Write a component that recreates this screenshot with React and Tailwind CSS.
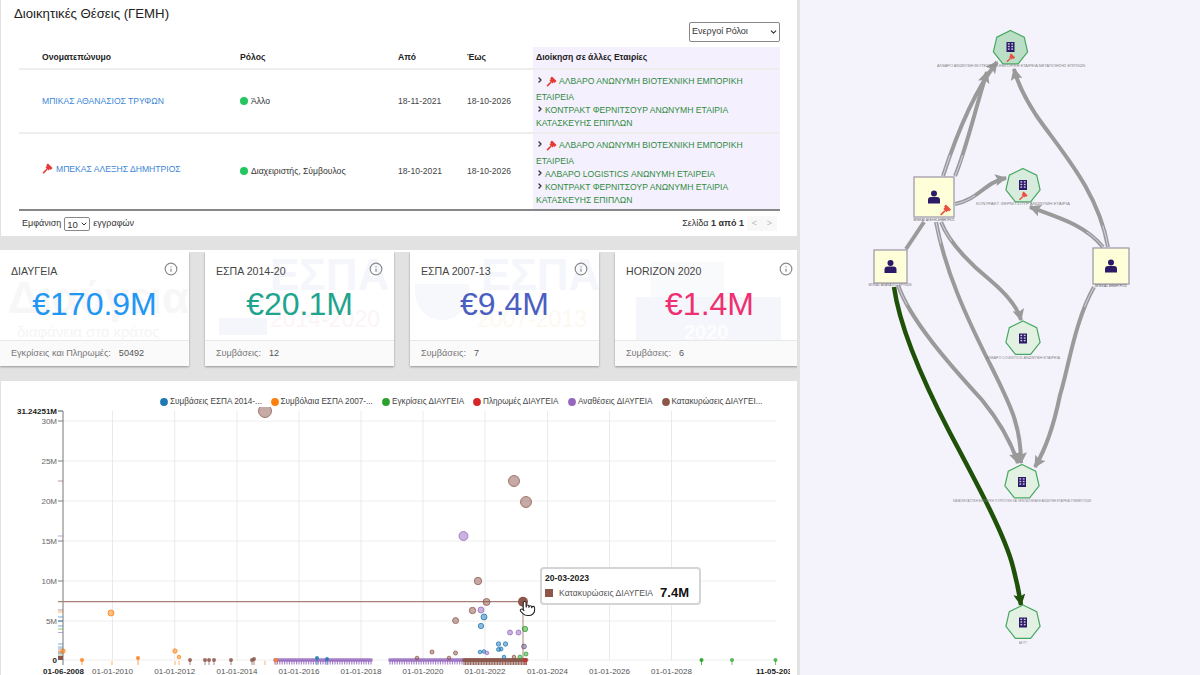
import { ChevronDown, ChevronRight, Info, Pointer } from "lucide-react";

const GAVEL_HEAD = "M6.5 .5 11.5 5.5 9.5 7.5 8.6 6.6 7 8.2 3.8 5 5.4 3.4 4.5 2.5Z";
const GAVEL_HANDLE = "M4.8 6.2 .6 10.4 1.8 11.6 6 7.4Z";

const Gavel = ({ className }) => (
  <svg viewBox="0 0 12 12" className={className}>
    <path d={GAVEL_HEAD} fill="#e53935" />
    <path d={GAVEL_HANDLE} fill="#e53935" />
  </svg>
);

const Director = ({ gavel, children }) => (
  <div className="leading-[13px] text-[#2e8b3d]">
    <ChevronRight size={8} strokeWidth={4} className="inline align-baseline text-[#333] mr-[1px]" />
    {gavel && <Gavel className="inline w-[11px] h-[11px] ml-[1px] mr-[2px] my-[4px] align-middle" />}
    {children}
  </div>
);

const Status = ({ children }) => (
  <span className="flex items-center gap-[3px] text-[#333]">
    <span className="w-[8px] h-[8px] rounded-full bg-[#22c55e]" />
    {children}
  </span>
);

const Dropdown = ({ value, className, iconSize }) => (
  <span className={`relative inline-block ${className}`}>
    <select className="appearance-none w-full h-full border border-[#888] rounded-[2px] bg-white pl-[2px] text-inherit">
      <option>{value}</option>
    </select>
    <ChevronDown size={iconSize} strokeWidth={3} className="absolute right-[2px] top-1/2 -translate-y-1/2 text-[#333]" />
  </span>
);

const PositionsTable = () => (
  <section className="ml-[1px] w-[796px] h-[236px] bg-white relative">
    <div className="flex justify-between pl-[13px] pr-[17px] pt-[6px] h-[47px]">
      <h2 className="text-[13.2px] text-[#222] leading-[16px]">Διοικητικές Θέσεις (ΓΕΜΗ)</h2>
      <Dropdown value="Ενεργοί Ρόλοι" iconSize={9} className="mt-[16px] w-[91px] h-[20px] text-[9px] text-[#333]" />
    </div>
    <div className="ml-[18px] w-[761px]">
      <table className="table-fixed w-full text-[8.6px] border-collapse">
        <colgroup>
          <col className="w-[217px]" />
          <col className="w-[158px]" />
          <col className="w-[69px]" />
          <col className="w-[70px]" />
          <col className="w-[247px]" />
        </colgroup>
        <thead>
          <tr className="h-[22px] border-b-2 border-[#eeeeee] font-bold text-[#222] text-left">
            <th className="pl-[23px]">Ονοματεπώνυμο</th>
            <th className="pl-[4px]">Ρόλος</th>
            <th className="pl-[4px]">Από</th>
            <th className="pl-[4px]">Έως</th>
            <th className="pl-[3px] bg-[#f5f0fd]">Διοίκηση σε άλλες Εταιρίες</th>
          </tr>
        </thead>
        <tbody>
          <tr className="h-[64px] border-b-2 border-[#eeeeee] text-[#444]">
            <td className="pl-[23px] text-[#3b86d8]">ΜΠΙΚΑΣ ΑΘΑΝΑΣΙΟΣ ΤΡΥΦΩΝ</td>
            <td className="pl-[4px]"><Status>Άλλο</Status></td>
            <td className="pl-[4px]">18-11-2021</td>
            <td className="pl-[4px]">18-10-2026</td>
            <td className="pl-[3px] bg-[#f5f0fd]">
              <Director gavel>ΑΛΒΑΡΟ ΑΝΩΝΥΜΗ ΒΙΟΤΕΧΝΙΚΗ ΕΜΠΟΡΙΚΗ ΕΤΑΙΡΕΙΑ</Director>
              <Director>ΚΟΝΤΡΑΚΤ ΦΕΡΝΙΤΣΟΥΡ ΑΝΩΝΥΜΗ ΕΤΑΙΡΙΑ ΚΑΤΑΣΚΕΥΗΣ ΕΠΙΠΛΩΝ</Director>
            </td>
          </tr>
          <tr className="h-[77px] border-b-2 border-[#888888] text-[#444]">
            <td className="pl-[23px] text-[#3b86d8] pb-[5px]">
              <span className="flex items-center gap-[3px]">
                <Gavel className="w-[11px] h-[11px]" />
                ΜΠΕΚΑΣ ΑΛΕΞΗΣ ΔΗΜΗΤΡΙΟΣ
              </span>
            </td>
            <td className="pl-[4px]"><Status>Διαχειριστής, Σύμβουλος</Status></td>
            <td className="pl-[4px]">18-10-2021</td>
            <td className="pl-[4px]">18-10-2026</td>
            <td className="pl-[3px] bg-[#f5f0fd]">
              <Director gavel>ΑΛΒΑΡΟ ΑΝΩΝΥΜΗ ΒΙΟΤΕΧΝΙΚΗ ΕΜΠΟΡΙΚΗ ΕΤΑΙΡΕΙΑ</Director>
              <Director>ΑΛΒΑΡΟ LOGISTICS ΑΝΩΝΥΜΗ ΕΤΑΙΡΕΙΑ</Director>
              <Director>ΚΟΝΤΡΑΚΤ ΦΕΡΝΙΤΣΟΥΡ ΑΝΩΝΥΜΗ ΕΤΑΙΡΙΑ ΚΑΤΑΣΚΕΥΗΣ ΕΠΙΠΛΩΝ</Director>
            </td>
          </tr>
        </tbody>
      </table>
      <div className="flex justify-between items-center h-[25px] pl-[3px] text-[9px] text-[#333]">
        <span className="flex items-center gap-[3px]">
          Εμφάνιση
          <Dropdown value="10" iconSize={8} className="w-[26px] h-[14px] text-[9.5px]" />
          εγγραφών
        </span>
        <span className="flex items-center">
          <span>Σελίδα <b>1 από 1</b></span>
          <span className="ml-[3px] w-[15px] h-[15px] bg-[#f8f8f8] text-[#bbb] text-center leading-[14px]">&lt;</span>
          <span className="w-[15px] h-[15px] mr-[3px] bg-[#f8f8f8] text-[#bbb] text-center leading-[14px]">&gt;</span>
        </span>
      </div>
    </div>
  </section>
);

const StatCard = ({ title, value, color, label, count, children }) => (
  <div className="relative w-[189px] h-[114px] shrink-0 bg-white shadow-[0_1px_2px_rgba(0,0,0,0.35)] overflow-hidden">
    {children}
    <div className="relative h-[88px]">
      <div className="flex justify-between px-[11px] pt-[12px] text-[10.6px] text-[#444] leading-[14px]">
        {title}
        <Info size={14} className="text-[#8a8a8a] -mt-[2px]" />
      </div>
      <div className={`text-center text-[32px] leading-[36px] mt-[8px] ${color}`}>{value}</div>
    </div>
    <div className="relative h-[26px] bg-[#fafafa] border-t border-[#e8e8e8] pl-[11px] flex items-center gap-[8px] text-[9.1px] text-[#777]">
      {label}
      <span className="text-[#555]">{count}</span>
    </div>
  </div>
);

const StatCards = () => (
  <section className="mt-[14px] w-[797px] border-t-2 border-white h-[131px] flex gap-[16px] overflow-hidden">
    <StatCard title="ΔΙΑΥΓΕΙΑ" value="€170.9M" color="text-[#2196f3]" label="Εγκρίσεις και Πληρωμές:" count="50492">
      <div className="absolute left-[8px] top-[22px] text-[44px] font-bold leading-[48px] text-[#f7f7f8]">Διαύγεια</div>
      <div className="absolute left-[17px] top-[71px] text-[15px] leading-[17px] text-[#f5f5f6] whitespace-nowrap">διαφάνεια στο κράτος</div>
    </StatCard>
    <StatCard title="ΕΣΠΑ 2014-20" value="€20.1M" color="text-[#1fa58e]" label="Συμβάσεις:" count="12">
      <div className="absolute left-[65px] top-[0px] text-[44px] leading-[46px] font-bold text-[#f4f6fb]">ΕΣΠΑ</div>
      <div className="absolute left-[65px] top-[52px] text-[23px] leading-[30px] text-[#fdf4f5] whitespace-nowrap">2014-2020</div>
      <div className="absolute left-[14px] top-[66px] w-[48px] h-[17px] bg-[#f4f6fb]" />
    </StatCard>
    <StatCard title="ΕΣΠΑ 2007-13" value="€9.4M" color="text-[#4b5ec1]" label="Συμβάσεις:" count="7">
      <div className="absolute left-[71px] top-[0px] text-[44px] leading-[46px] font-bold text-[#f4f6fb]">ΕΣΠΑ</div>
      <div className="absolute left-[67px] top-[52px] text-[23px] leading-[30px] text-[#fdf8f1] whitespace-nowrap">2007-2013</div>
      <div className="absolute left-[5px] top-[32px] w-[54px] h-[36px] rounded-b-full bg-[#f7f8fc]" />
    </StatCard>
    <StatCard title="HORIZON 2020" value="€1.4M" color="text-[#ee2f70]" label="Συμβάσεις:" count="6">
      <div className="absolute left-[21px] top-[45px] w-[145px] h-[43px] bg-[#f4f6fb]" />
      <div className="absolute left-[36px] top-[10px] w-[73px] h-[35px] bg-[#f9fafc]" />
      <div className="absolute left-[69px] top-[70px] text-[20px] leading-[20px] font-bold text-[#fdfdfe]">2020</div>
    </StatCard>
  </section>
);

const legend = [
  ["#1f77b4", "Συμβάσεις ΕΣΠΑ 2014-...", 88.5],
  ["#ff7f0e", "Συμβόλαια ΕΣΠΑ 2007-...", 89.5],
  ["#2ca02c", "Εγκρίσεις ΔΙΑΥΓΕΙΑ", 69],
  ["#d62728", "Πληρωμές ΔΙΑΥΓΕΙΑ", 73],
  ["#9467bd", "Αναθέσεις ΔΙΑΥΓΕΙΑ", 71.5],
  ["#8c564b", "Κατακυρώσεις ΔΙΑΥΓΕΙ...", 88],
];

const yTicks = [["30M", 421], ["25M", 461], ["20M", 501], ["15M", 541], ["10M", 581], ["5M", 621]];
const xTicks = [
  ["01-01-2010", 112.5], ["01-01-2012", 174.7], ["01-01-2014", 237], ["01-01-2016", 299], ["01-01-2018", 361],
  ["01-01-2020", 423], ["01-01-2022", 485], ["01-01-2024", 547.5], ["01-01-2026", 609.5], ["01-01-2028", 671.5],
];

const BROWN = "#8c564b";
const PURPLE = "#9467bd";
const BLUE = "#1f77b4";
const ORANGE = "#ff7f0e";
const GREEN = "#2ca02c";

const dots = [
  [265, 411, 6.5, BROWN], [514, 481, 5.5, BROWN], [526, 502, 5.5, BROWN], [463.5, 536, 4.5, PURPLE],
  [478, 581, 3.7, BROWN], [486.5, 602, 3.5, BROWN], [472.5, 610.5, 3.2, BROWN], [481, 610, 3, PURPLE],
  [484, 617, 3, BLUE], [481, 626, 2.7, BLUE], [455.6, 620.6, 3, BROWN], [510, 632.5, 2.5, PURPLE],
  [518.5, 632.5, 2.5, PURPLE], [525, 629, 2.7, GREEN], [498.5, 644, 2.2, BLUE], [505.5, 644, 2.2, BLUE],
  [501, 649, 2, BLUE], [498.5, 649.5, 2, BLUE], [432, 652, 2, BROWN], [455.5, 653, 2, BROWN],
  [480, 652, 1.8, BLUE], [484, 651.5, 1.8, BLUE], [487, 653, 1.8, PURPLE], [417, 658, 1.8, BROWN],
  [449, 658, 1.8, BROWN], [526, 654, 2, GREEN], [520, 657, 2, GREEN], [504, 657, 1.8, BLUE],
  [514, 657, 1.8, BROWN], [524, 646.5, 2.4, "#6a5a8c"], [111, 613, 3, ORANGE], [63, 651, 2.2, ORANGE],
  [175, 651, 2.2, ORANGE], [179, 657, 1.8, ORANGE],
];

const pins = [
  [82, 660, ORANGE], [138, 658, ORANGE], [190, 660, BROWN], [205, 660, BROWN], [209, 660, BROWN], [214, 660, BROWN],
  [231, 660, BROWN], [252, 660, BROWN], [254, 659, BROWN], [276, 660, ORANGE], [317, 658, BLUE], [327, 659, BLUE],
  [525, 660, "#d62728"], [701.5, 660, "#1b9a1b"], [732, 660, "#3cae3c"], [775.5, 660, "#3cae3c"],
];

const rug = [
  [481, BROWN], [536, PURPLE], [610, BROWN], [612, ORANGE], [617, BLUE], [621, BLUE], [626, BLUE],
  [629, GREEN], [632.5, PURPLE], [644, BLUE], [647, BLUE], [649, BLUE], [651, ORANGE], [652, BROWN], [653, PURPLE],
  [654, GREEN], [656, BROWN], [657, GREEN],
];

const band = (from, to, step) => {
  const xs = [];
  for (let x = from; x <= to; x += step) xs.push(x);
  return xs;
};

const Chart = () => (
  <section className="relative ml-[1px] w-[796px] h-[294px] bg-white">
    <div className="flex h-[26px] pt-[15px] pl-[159px] text-[8.2px] leading-[11px] text-[#444]">
      {legend.map(([color, name, width]) => (
        <span key={name} className="flex items-center gap-[2px] shrink-0 mr-[12px]">
          <svg width="8" height="8" viewBox="0 0 8 8"><circle cx="4" cy="4" r="3.9" fill={color} /></svg>
          <span className="whitespace-nowrap" style={{ width }}>{name}</span>
        </span>
      ))}
    </div>
    <svg width="789" height="268" viewBox="1 407 789 268" className="block font-['Liberation_Sans',Arial,sans-serif]">
      {yTicks.map(([t, y]) => (
        <g key={t}>
          <line x1="58" x2="776" y1={y} y2={y} stroke="#eeeeee" />
          <line x1="58" x2="63" y1={y} y2={y} stroke="#888" />
          <text x="57" y={y + 3} fontSize="8" textAnchor="end" fill="#666">{t}</text>
        </g>
      ))}
      <line x1="63" x2="776" y1="660" y2="660" stroke="#eeeeee" />
      {xTicks.map(([t, x]) => (
        <g key={t}>
          <line x1={x} x2={x} y1="411" y2="660" stroke="#eaeaea" />
          <text x={x} y="674" fontSize="8" textAnchor="middle" fill="#555">{t}</text>
        </g>
      ))}
      <line x1="58" x2="63" y1="411" y2="411" stroke="#555" />
      <line x1="63" x2="63" y1="411" y2="665" stroke="#777" />
      <text x="57" y="414" fontSize="8" fontWeight="bold" textAnchor="end" fill="#222">31.24251M</text>
      <text x="57" y="663" fontSize="8" fontWeight="bold" textAnchor="end" fill="#222">0</text>
      <text x="63.5" y="674" fontSize="8" fontWeight="bold" textAnchor="middle" fill="#222">01-06-2008</text>
      <text x="756" y="674" fontSize="8" fontWeight="bold" fill="#222">11-05-2030</text>

      {rug.map(([y, c], i) => <line key={i} x1="58" x2="63" y1={y} y2={y} stroke={c} strokeOpacity="0.6" />)}
      <rect x="58" y="656" width="5" height="4" fill={BROWN} />

      <line x1="58" x2="523" y1="601.7" y2="601.7" stroke="#a67f77" strokeWidth="1.2" />
      <line x1="523" x2="523" y1="601.7" y2="660" stroke="#c8aea8" strokeWidth="1.5" />

      {[112, 175, 179, 265].map((x) => (
        <line key={x} x1={x} x2={x} y1="661" y2="665" stroke="#ffb066" />
      ))}

      {band(275, 371, 2.4).concat(band(390, 464, 2.4)).map((x) => (
        <g key={x}>
          <line x1={x} x2={x} y1="660" y2="664.5" stroke={PURPLE} strokeOpacity="0.8" strokeWidth="1.2" />
          <circle cx={x} cy="660" r="1.9" fill={PURPLE} fillOpacity="0.75" />
        </g>
      ))}
      {band(464, 527, 1.6).map((x) => (
        <g key={x}>
          <line x1={x} x2={x} y1="660" y2="665" stroke={BROWN} strokeOpacity="0.9" strokeWidth="1.2" />
          <circle cx={x} cy="660" r="2" fill={BROWN} fillOpacity="0.9" />
        </g>
      ))}

      {pins.map(([x, y, c]) => (
        <g key={x}>
          <line x1={x} x2={x} y1={y} y2="665" stroke={c} strokeOpacity="0.7" />
          <circle cx={x} cy={y} r="2" fill={c} fillOpacity="0.85" />
        </g>
      ))}

      {dots.map(([x, y, r, c]) => (
        <circle key={`${x}-${y}`} cx={x} cy={y} r={r} fill={c} fillOpacity="0.5" stroke={c} strokeOpacity="0.75" />
      ))}
      <circle cx="523" cy="601.7" r="5" fill={BROWN} />
    </svg>
    <div className="absolute left-[539px] top-[186px] w-[161px] h-[38px] bg-white border-2 border-[#d4d4d4] rounded-[4px] pl-[3px] pt-[4px]">
      <div className="text-[8.6px] font-bold leading-[11px] text-[#222]">20-03-2023</div>
      <div className="flex items-center mt-[1px] text-[8.6px] text-[#555] leading-[16px] whitespace-nowrap">
        <span className="w-[8px] h-[8px] bg-[#8c564b] mr-[6px]" />
        Κατακυρώσεις ΔΙΑΥΓΕΙΑ
        <b className="ml-[7px] text-[13px] text-[#111]">7.4M</b>
      </div>
    </div>
    <Pointer size={17} fill="#ffffff" strokeWidth={1.5} className="absolute left-[518px] top-[219px] text-[#222]" />
  </section>
);

const heptagon = (cx, cy, r) =>
  Array.from({ length: 7 }, (_, i) => {
    const a = ((-90 + (i * 360) / 7) * Math.PI) / 180;
    return `${(cx + r * Math.cos(a)).toFixed(1)},${(cy + r * Math.sin(a)).toFixed(1)}`;
  }).join(" ");

const edges = [
  "M943 176C958 130 975 90 997 62",
  "M955 176C966 150 975 110 987 72",
  "M1108 247C1098 190 1060 150 1036 115C1025 98 1018 85 1014 69",
  "M955 204C978 200 985 182 1006 178",
  "M1103 247C1085 225 1060 218 1030 207",
  "M936 222C945 270 965 315 993 370C1010 405 1021 425 1021 463",
  "M941 222C950 245 975 268 990 280C1003 291 1017 305 1021 320",
  "M898 285C910 320 950 365 982 400C1000 422 1012 445 1018 463",
  "M1094 287C1075 320 1068 370 1060 395C1054 425 1045 450 1035 467",
];

const Company = ({ cx, cy, fill, gavel }) => {
  const top = cy - (gavel ? 6 : 5);
  return (
    <g>
      <polygon points={heptagon(cx, cy, 17.5)} fill={fill} stroke="#46a860" strokeWidth="1.2" />
      <rect x={cx - 4} y={top} width="8" height="10" fill="#2d1a66" />
      {[0, 1, 2].map((r) => (
        <g key={r} fill="#cfc8e8">
          <rect x={cx - 2.6} y={top + 1.2 + r * 2.6} width="1.8" height="1.4" />
          <rect x={cx + 0.8} y={top + 1.2 + r * 2.6} width="1.8" height="1.4" />
        </g>
      ))}
      {gavel && (
        <g transform={`translate(${cx - 4.5} ${cy + 5}) scale(0.8)`} fill="#e8503f">
          <path d={GAVEL_HEAD} />
          <path d={GAVEL_HANDLE} />
        </g>
      )}
    </g>
  );
};

const Person = ({ x, y, size, gavel }) => (
  <g>
    <rect x={x} y={y} width={size} height={size} fill="#fefed8" stroke="#9a94a8" strokeWidth="1.2" />
    <circle cx={x + size / 2} cy={y + size / 2 - 3.5} r="3" fill="#2d1a66" />
    <path d={`M${x + size / 2 - 6} ${y + size / 2 + 6.5}v-3.5q0-3 3-3h6q3 0 3 3v3.5z`} fill="#2d1a66" />
    {gavel && (
      <g transform={`translate(${x + size - 14.5} ${y + size - 13})`} fill="#e8503f">
        <path d={GAVEL_HEAD} />
        <path d={GAVEL_HANDLE} />
      </g>
    )}
  </g>
);

const labels = [
  ["ΑΛΒΑΡΟ ΑΝΩΝΥΜΗ ΒΙΟΤΕΧΝΙΚΗ ΕΜΠΟΡΙΚΗ ΕΤΑΙΡΕΙΑ ΜΕΤΑΠΟΙΗΣΗΣ ΕΠΙΠΛΩΝ", 1011, 67, 148, "#888"],
  ["ΚΟΝΤΡΑΚΤ ΦΕΡΝΙΤΣΟΥΡ ΑΝΩΝΥΜΗ ΕΤΑΙΡΙΑ", 1023, 205, 94, "#888"],
  ["ΑΛΒΑΡΟ LOGISTICS ΑΝΩΝΥΜΗ ΕΤΑΙΡΕΙΑ", 1023, 359, 74, "#888"],
  ["ΚΑΤΑΣΚΕΥΑΣΤΙΚΗ ΕΜΠΟΡΙΚΗ ΤΟΥΡΙΣΤΙΚΗ ΚΑΙ ΞΕΝΟΔΟΧΕΙΑΚΗ ΑΝΩΝΥΜΗ ΕΤΑΙΡΕΙΑ ΣΥΜΜΕΤΟΧΩΝ", 1022, 502, 138, "#888"],
  ["ΑΕ ΙΤΥ", 1023, 644, 8, "#888"],
  ["ΜΠΕΚΑΣ ΑΛΕΞΗΣ ΔΗΜΗΤΡΙΟΣ", 934, 221, 41, "#555"],
  ["ΜΠΙΚΑΣ ΑΘΑΝΑΣΙΟΣ ΤΡΥΦΩΝ", 890, 286, 43, "#777"],
  ["ΜΠΕΚΑΣ ΔΗΜΗΤΡΙΟΣ", 1111, 287, 32, "#555"],
];

const NetworkGraph = () => (
  <aside className="w-[400px] h-[675px] shrink-0 bg-[#f4f2fb]">
    <svg width="400" height="675" viewBox="800 0 400 675" className="block font-['Liberation_Sans',Arial,sans-serif]">
      <defs>
        <marker id="arrow-grey" viewBox="0 0 10 10" refX="9" refY="5" markerWidth="12" markerHeight="12" markerUnits="userSpaceOnUse" orient="auto">
          <path d="M0 0L10 5L0 10L2 5Z" fill="#9a9a9a" />
        </marker>
        <marker id="arrow-green" viewBox="0 0 10 10" refX="9" refY="5" markerWidth="12" markerHeight="12" markerUnits="userSpaceOnUse" orient="auto">
          <path d="M0 0L10 5L0 10L2 5Z" fill="#1f5208" />
        </marker>
      </defs>
      <path d="M924 222L906 249" fill="none" stroke="#9a9a9a" strokeWidth="4" />
      {edges.map((d) => (
        <g key={d} fill="none">
          <path d={d} stroke="#9a9a9a" strokeWidth="4" markerEnd="url(#arrow-grey)" />
          <path d={d} stroke="#d8d4e8" strokeWidth="1" strokeDasharray="22 1000" />
        </g>
      ))}
      <path d="M894 287C900 330 925 385 950 433C975 480 1005 535 1013 567C1017 582 1019 592 1021 605" fill="none" stroke="#1f5208" strokeWidth="4.5" markerEnd="url(#arrow-green)" />
      <Company cx={1010.5} cy={48} fill="#bbdfc6" gavel />
      <Company cx={1023} cy={186} fill="#d8ecdd" gavel />
      <Company cx={1023} cy={338.5} fill="#e2f1e2" />
      <Company cx={1022} cy={482} fill="#e2f1e2" />
      <Company cx={1023} cy={622.5} fill="#e2f1e2" />
      <Person x={914} y={177} size={40} gavel />
      <Person x={874} y={250} size={33} />
      <Person x={1093} y={248} size={36} />
      {labels.map(([t, x, y, w, c]) => (
        <text key={t} x={x} y={y} fontSize="3" fill={c} textAnchor="middle" textLength={w} lengthAdjust="spacingAndGlyphs">{t}</text>
      ))}
    </svg>
  </aside>
);

export default function App() {
  return (
    <div className="flex w-[1200px] h-[675px] overflow-hidden bg-[#f4f2fb] font-['Liberation_Sans',Arial,sans-serif]">
      <main className="w-[800px] h-[675px] shrink-0 bg-[#e2e2e2] overflow-hidden">
        <PositionsTable />
        <StatCards />
        <Chart />
      </main>
      <NetworkGraph />
    </div>
  );
}
